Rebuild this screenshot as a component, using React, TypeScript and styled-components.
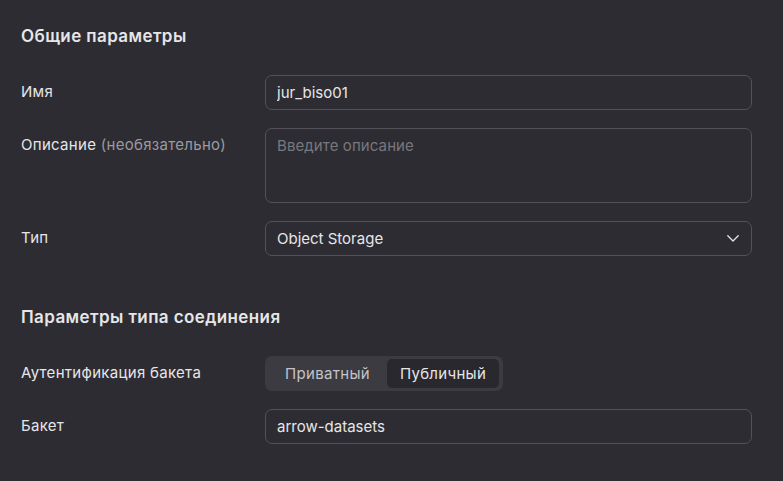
import React, { useState } from 'react';
import styled, { createGlobalStyle } from 'styled-components';

const colors = {
    background: "#2d2c33",
    text: "#e6e6e8",
    secondary: "#9b9a9f",
    hint: "#78777c",
    border: "#535258",
    track: "#3c3b41",
    selected: "#29282e"
};

const GlobalStyle = createGlobalStyle`
    html, body {
        margin: 0;
        padding: 0;
        background: ${colors.background};
    }
    body {
        font-family: Inter, "Noto Sans", sans-serif;
        color: ${colors.text};
    }
`;

const authOptions = [
    { value: "private", title: "Приватный", width: 119 },
    { value: "public", title: "Публичный", width: 112 }
];

function App() {
    const [auth, setAuth] = useState("public");

    return (
        <>
            <GlobalStyle />
            <Page>
                <Section>
                    <Heading>Общие параметры</Heading>
                    <Row>
                        <Label>Имя</Label>
                        <TextInput defaultValue="jur_biso01" />
                    </Row>
                    <Row>
                        <Label>
                            Описание <Optional>(необязательно)</Optional>
                        </Label>
                        <TextArea placeholder="Введите описание" />
                    </Row>
                    <Row>
                        <Label>Тип</Label>
                        <Select>
                            <span>Object Storage</span>
                            <svg width="12" height="7" viewBox="0 0 12 7" fill="none">
                                <path d="M0.8 0.8l5.2 5.2 5.2-5.2" stroke={colors.text} strokeWidth="1.3" strokeLinecap="round" strokeLinejoin="round" />
                            </svg>
                        </Select>
                    </Row>
                </Section>
                <Section>
                    <Heading>Параметры типа соединения</Heading>
                    <Row>
                        <Label>Аутентификация бакета</Label>
                        <Segmented>
                            {authOptions.map((opt) => (
                                <Option
                                    key={opt.value}
                                    $width={opt.width}
                                    $active={auth === opt.value}
                                    onClick={() => setAuth(opt.value)}
                                >
                                    {opt.title}
                                </Option>
                            ))}
                        </Segmented>
                    </Row>
                    <Row>
                        <Label>Бакет</Label>
                        <TextInput defaultValue="arrow-datasets" />
                    </Row>
                </Section>
            </Page>
        </>
    );
}

export default App;

const Page = styled.div`
    display: flex;
    flex-direction: column;
    gap: 49px;
    width: 783px;
    height: 481px;
    box-sizing: border-box;
    padding: 24px 31px 0 21px;
    background: ${colors.background};
`;

const Section = styled.div`
    display: flex;
    flex-direction: column;
    gap: 18px;
`;

const Heading = styled.h2`
    margin: 0 0 9px;
    font-size: 17px;
    line-height: 24px;
    font-weight: 600;
    letter-spacing: 0.4px;
    color: ${colors.text};
`;

const Row = styled.div`
    display: grid;
    grid-template-columns: 244px 487px;
    align-items: start;
`;

const Label = styled.div`
    font-size: 15px;
    line-height: 20px;
    letter-spacing: 0.3px;
    padding-top: 7px;
    color: ${colors.text};
`;

const Optional = styled.span`
    color: ${colors.secondary};
`;

const fieldBase = `
    box-sizing: border-box;
    width: 100%;
    border: 1px solid ${colors.border};
    border-radius: 7px;
    background: transparent;
    color: ${colors.text};
    font-family: Inter, "Noto Sans", sans-serif;
    font-size: 15px;
    line-height: 20px;
    padding: 0 11px;
    outline: none;
`;

const TextInput = styled.input`
    ${fieldBase}
    height: 35px;
`;

const TextArea = styled.textarea`
    ${fieldBase}
    height: 75px;
    padding-top: 7px;
    resize: none;
    &::placeholder {
        color: ${colors.hint};
        letter-spacing: 0.1px;
    }
`;

const Select = styled.div`
    ${fieldBase}
    height: 35px;
    display: flex;
    align-items: center;
    justify-content: space-between;
    padding-right: 12px;
`;

const Segmented = styled.div`
    display: flex;
    width: 238px;
    height: 35px;
    box-sizing: border-box;
    padding: 3px;
    border-radius: 7px;
    background: ${colors.track};
`;

const Option = styled.button<{ $active: boolean; $width: number }>`
    flex: 0 0 ${(props) => props.$width}px;
    border: none;
    border-radius: 5px;
    background: ${(props) => (props.$active ? colors.selected : "transparent")};
    color: ${(props) => (props.$active ? colors.text : "#c4c3c7")};
    font-family: Inter, "Noto Sans", sans-serif;
    font-size: 15px;
    letter-spacing: 0.3px;
    padding: 0;
    cursor: pointer;
`;
